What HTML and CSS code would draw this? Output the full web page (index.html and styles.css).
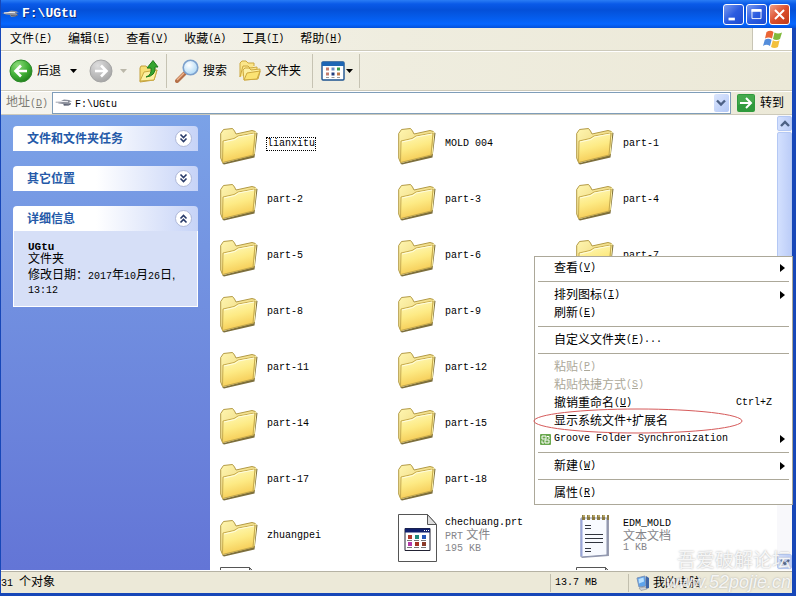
FILE: index.html
```html
<!DOCTYPE html>
<html lang="zh-CN">
<head>
<meta charset="utf-8">
<title>F:\UGtu</title>
<link rel="stylesheet" href="styles.css">
</head>
<body>
<svg class="defs" aria-hidden="true">
  <defs>
    <linearGradient id="gFolder" x1="0" y1="0" x2="0.3" y2="1"><stop offset="0" stop-color="#fffbc0"/><stop offset="0.55" stop-color="#fdea84"/><stop offset="1" stop-color="#f5cb55"/></linearGradient>
    <linearGradient id="gBack" x1="0" y1="0" x2="1" y2="1"><stop offset="0" stop-color="#fff6b0"/><stop offset="1" stop-color="#e5c765"/></linearGradient>
    <radialGradient id="gGreen" cx="0.35" cy="0.25" r="0.8"><stop offset="0" stop-color="#8fdc7c"/><stop offset="0.6" stop-color="#3fae35"/><stop offset="1" stop-color="#1f7d1c"/></radialGradient>
    <radialGradient id="gGrey" cx="0.35" cy="0.25" r="0.8"><stop offset="0" stop-color="#dedede"/><stop offset="1" stop-color="#a3a3a3"/></radialGradient>
    <radialGradient id="gLens" cx="0.4" cy="0.35" r="0.7"><stop offset="0" stop-color="#fff"/><stop offset="1" stop-color="#a9d6f5"/></radialGradient>
    <symbol id="folder" viewBox="0 0 38 38">
      <path d="M2 36.500L4 37.500 34.500 30.500 37.500 6 35 5 33 28z" fill="#7d6f3c"/>
      <path d="M.7 31V6.500L3.500 2.500 12.500 1.500 14.500 4 16 7 32 3.500 35.500 4.500 34 28 2.500 35.500z" fill="url(#gBack)" stroke="#b39a45"/>
      <path d="M33 6l3-1-2 22" fill="none" stroke="#fff4a8"/>
      <path d="M3 14L14 11.500 18 9 35 6 33 28 2.500 35.500z" fill="url(#gFolder)" stroke="#c6aa4d"/>
      <path d="M4 15L15 12.500 18.500 10 34 7" fill="none" stroke="#fffde0"/>
    </symbol>
    <symbol id="ship" viewBox="0 0 17 8">
      <path d="M0 3l6-1 3-1.500 5 .5 3 1.500-3 .5 2 2-3 1.500-4 .5L8 5 4 4.500z" fill="#8b8f9b"/>
      <path d="M2 3l6-.5 5 .2" stroke="#f4f4f8" fill="none"/><path d="M9 5.500l5 .5 2-1.500" stroke="#5a6072" fill="none"/>
    </symbol>
    <symbol id="caret" viewBox="0 0 7 4"><path d="M0 0h7L3.500 4z" fill="currentColor"/></symbol>
    <symbol id="dbl" viewBox="0 0 19 19">
      <circle cx="9.500" cy="9.500" r="8" fill="#fff" stroke="#aeb8d8"/>
      <path d="M6.500 5.500l3 3 3-3M6.500 9.500l3 3 3-3" fill="none" stroke="#283a68" stroke-width="1.600"/>
    </symbol>
    <symbol id="pc" viewBox="0 0 14 16">
      <path d="M1 3l8-2 1 10-7 1z" fill="#5da3ec" stroke="#7c93b8"/><path d="M2.500 4l5-1.500.5 4-5 2z" fill="#b9e0ff"/><path d="M10 1l3 2v10l-3 1z" fill="#3f66a8"/><path d="M3 13l6-1 2 2-6 1.500z" fill="#cfd3d8" stroke="#8b8f96" stroke-width="0.600"/>
    </symbol>
  </defs>
</svg>

<div class="window">
  <header class="titlebar">
    <svg class="ship"><use href="#ship"/></svg>
    <h1>F:\UGtu</h1>
    <div class="winbtns">
      <button class="wbtn" aria-label="最小化"><svg viewBox="0 0 21 21"><path d="M5 15.500h7" stroke="#fff" stroke-width="3"/></svg></button>
      <button class="wbtn" aria-label="最大化"><svg viewBox="0 0 21 21"><path d="M5.500 5h10v10h-10z" fill="none" stroke="#fff"/><path d="M5 6h11" stroke="#fff" stroke-width="3"/></svg></button>
      <button class="wbtn close" aria-label="关闭"><svg viewBox="0 0 21 21"><path d="M5.500 5.500l10 10M15.500 5.500l-10 10" stroke="#fff" stroke-width="2.200"/></svg></button>
    </div>
  </header>

  <nav class="menubar">
    <button>文件<span class="en">(<u>F</u>)</span></button>
    <button>编辑<span class="en">(<u>E</u>)</span></button>
    <button>查看<span class="en">(<u>V</u>)</span></button>
    <button>收藏<span class="en">(<u>A</u>)</span></button>
    <button>工具<span class="en">(<u>T</u>)</span></button>
    <button>帮助<span class="en">(<u>H</u>)</span></button>
    <div class="flag"><svg viewBox="0 0 20 19">
      <path d="M3.500 2q4-2.500 7 0L9 8.500q-3.500-2-7 0z" fill="#ea6535"/>
      <path d="M11.500 2.500q3.500 2 7.500 0l-2 6.500q-3.500 2-7 0z" fill="#80b93c"/>
      <path d="M1.800 9.700q3.500-2 6.800 0L7 16q-3.500-2.300-7 0z" fill="#548ddb"/>
      <path d="M9.800 10.300q3.500 2 6.800 0L15 17q-3.500 2-7 0z" fill="#f3c03d"/></svg></div>
  </nav>

  <div class="toolbar">
    <button class="tool"><svg class="i24" viewBox="0 0 24 24"><circle cx="12" cy="12" r="11" fill="url(#gGreen)" stroke="#2e8a2a"/><path d="M18 12H7M12 6.500L6.500 12l5.500 5.500" fill="none" stroke="#fff" stroke-width="2.600"/></svg>后退</button>
    <button class="drop" aria-label="后退列表"><svg class="caret"><use href="#caret"/></svg></button>
    <button class="tool" aria-label="前进"><svg class="i24" viewBox="0 0 24 24"><circle cx="12" cy="12" r="11" fill="url(#gGrey)" stroke="#a5a5a5"/><path d="M6 12h11M12 6.500l5.500 5.500-5.500 5.500" fill="none" stroke="#fff" stroke-width="2.600"/></svg></button>
    <button class="drop off" aria-label="前进列表"><svg class="caret"><use href="#caret"/></svg></button>
    <button class="tool up" aria-label="向上"><svg class="i24" viewBox="0 0 24 24"><path d="M2 9l1-2h5l2 2h7v3l2-1-3 10L2 23z" fill="#f8df74" stroke="#c3a03c"/><path d="M2 22l4-9 13-2-3 10z" fill="#fdf0a0" stroke="#c9a840"/><path d="M8 18q6-2 5-9H9l6-7.500L20 8h-3q1 9-9 10z" fill="#35a52f" stroke="#1e7a1c"/></svg></button>
    <span class="sep"></span>
    <button class="tool"><svg class="i24" viewBox="0 0 24 24"><path d="M2 22l8-8" stroke="#b5704a" stroke-width="4" stroke-linecap="round"/><path d="M2 21l7-7" stroke="#f0b48c" stroke-width="1.500"/><circle cx="15.500" cy="8.500" r="7.300" fill="url(#gLens)" stroke="#7ca0cc" stroke-width="1.600"/></svg>搜索</button>
    <button class="tool folders"><svg class="i24" viewBox="0 0 24 24"><path d="M2 18V4l2-2h4l2 2h6v3" fill="#fbe68a" stroke="#cda83e"/><path d="M2 18L5 7h5l2 2 7-1v3" fill="#fbe68a" stroke="#cda83e"/><path d="M6 21l-1-10 2-2h4l2 2 9-1v3l-2 7z" fill="#fdf0a2" stroke="#cda83e"/><path d="M6 21l3-7 13-2-3 8z" fill="#fbe373" stroke="#cda83e"/></svg>文件夹</button>
    <span class="sep"></span>
    <button class="tool views" aria-label="查看"><svg class="i24" viewBox="0 0 24 24"><rect x="1" y="3" width="22" height="18" rx="1" fill="#fff" stroke="#1c5390" stroke-width="1.400"/><path d="M1 5h22" stroke="#1e66b4" stroke-width="4"/><path d="M5 10h3M5 15h3" stroke="#c47c6c" stroke-width="3"/><path d="M10.500 10h3" stroke="#6b8dc4" stroke-width="3"/><path d="M10.500 15h3" stroke="#203c7c" stroke-width="3"/><path d="M16 10h3" stroke="#3a9a4a" stroke-width="3"/><path d="M16 15h3" stroke="#c07848" stroke-width="3"/><path d="M5 18.500h14" stroke="#999" stroke-dasharray="3 2.500"/></svg><svg class="caret"><use href="#caret"/></svg></button>
    <span class="sep"></span>
  </div>

  <div class="addressbar">
    <label for="addr">地址<span class="en">(<u>D</u>)</span></label>
    <div class="field">
      <svg class="ship"><use href="#ship"/></svg>
      <input id="addr" type="text" value="F:\UGtu">
      <button class="pick" aria-label="展开"><svg viewBox="0 0 10 8"><path d="M1 1.500l4 4 4-4" fill="none" stroke="#4d6185" stroke-width="2.400"/></svg></button>
    </div>
    <button class="go"><svg viewBox="0 0 18 18"><rect width="18" height="18" rx="2" fill="#2f9a3c"/><path d="M1 1h16v7q-8-2-16 3z" fill="#5cb85c" opacity="0.500"/><path d="M3 9h11M9 4l5 5-5 5" fill="none" stroke="#fff" stroke-width="2"/></svg>转到</button>
  </div>

  <div class="main">
    <aside class="side">
      <section class="panel"><h2>文件和文件夹任务<svg><use href="#dbl"/></svg></h2></section>
      <section class="panel"><h2>其它位置<svg><use href="#dbl"/></svg></h2></section>
      <section class="panel open"><h2>详细信息<svg class="flip"><use href="#dbl"/></svg></h2>
        <div class="details">
          <p class="name">UGtu</p>
          <p>文件夹</p>
          <p class="date">修改日期：<span class="en">2017</span>年<span class="en">10</span>月<span class="en">26</span>日, <span class="en">13:12</span></p>
        </div>
      </section>
    </aside>

    <main class="files">
      <div class="item"><svg class="fi"><use href="#folder"/></svg><span class="label focus">lianxitu</span></div>
      <div class="item"><svg class="fi"><use href="#folder"/></svg><span class="label">MOLD 004</span></div>
      <div class="item"><svg class="fi"><use href="#folder"/></svg><span class="label">part-1</span></div>
      <div class="item"><svg class="fi"><use href="#folder"/></svg><span class="label">part-2</span></div>
      <div class="item"><svg class="fi"><use href="#folder"/></svg><span class="label">part-3</span></div>
      <div class="item"><svg class="fi"><use href="#folder"/></svg><span class="label">part-4</span></div>
      <div class="item"><svg class="fi"><use href="#folder"/></svg><span class="label">part-5</span></div>
      <div class="item"><svg class="fi"><use href="#folder"/></svg><span class="label">part-6</span></div>
      <div class="item"><svg class="fi"><use href="#folder"/></svg><span class="label">part-7</span></div>
      <div class="item"><svg class="fi"><use href="#folder"/></svg><span class="label">part-8</span></div>
      <div class="item"><svg class="fi"><use href="#folder"/></svg><span class="label">part-9</span></div>
      <div class="item c1"><svg class="fi"><use href="#folder"/></svg><span class="label">part-11</span></div>
      <div class="item"><svg class="fi"><use href="#folder"/></svg><span class="label">part-12</span></div>
      <div class="item c1"><svg class="fi"><use href="#folder"/></svg><span class="label">part-14</span></div>
      <div class="item"><svg class="fi"><use href="#folder"/></svg><span class="label">part-15</span></div>
      <div class="item c1"><svg class="fi"><use href="#folder"/></svg><span class="label">part-17</span></div>
      <div class="item"><svg class="fi"><use href="#folder"/></svg><span class="label">part-18</span></div>
      <div class="item c1"><svg class="fi"><use href="#folder"/></svg><span class="label">zhuangpei</span></div>
      <div class="item"><svg class="doc" viewBox="0 0 40 48"><path d="M.5.500h29l9 10v37H.5z" fill="#fff" stroke="#555"/><path d="M29.500.500v10h9z" fill="#ddd" stroke="#555"/><path d="M7 14.500h25v22H7z" fill="#fff" stroke="#223"/><path d="M7 16.500h25" stroke="#10206e" stroke-width="4"/><path d="M26 16.500h5" stroke="#fff" stroke-dasharray="1 1"/><path d="M10 21h4v4h-4z" fill="#b03a2e"/><path d="M17 21h4v4h-4z" fill="#1e8a7a"/><path d="M24 21h4v4h-4z" fill="#2456b8"/><path d="M10 28h4v4h-4z" fill="#b53aa8"/><path d="M17 28h4v4h-4z" fill="#a43324"/><path d="M24 28h4v4h-4z" fill="#8a3a28"/><path d="M9 26.500h20M9 33.500h20" stroke="#777" stroke-dasharray="5 2"/></svg>
        <div class="meta"><span class="label">chechuang.prt</span><span><span class="en">PRT</span> 文件</span><span class="en">195 KB</span></div></div>
      <div class="item"><svg class="doc" viewBox="0 0 40 48"><path d="M6 43l26-2V5" fill="none" stroke="#9a9db0" stroke-width="2"/><path d="M5 4h26v37L5 43z" fill="#f8faff" stroke="#8a92ac"/><path d="M5.500 5v37" stroke="#99a5d8" stroke-width="2"/><path d="M6 3.500h27" stroke="#8a7a42" stroke-width="5" stroke-dasharray="3 2"/><path d="M7 2h25" stroke="#e4d68e" stroke-dasharray="2 3"/><path d="M9 11.500h6M9 14.500h6M9 20.500h18M9 24.500h18M9 28.500h18M9 34.500h6M9 37.500h6" stroke="#30343e"/></svg>
        <div class="meta"><span class="label">EDM_MOLD</span><span>文本文档</span><span class="en">1 KB</span></div></div>
      <div class="item next c1"><svg class="doc" viewBox="0 0 40 48"><path d="M.5.500h29l9 10v37H.5z" fill="#fff" stroke="#555"/><path d="M29.500.500v10h9z" fill="#ddd" stroke="#555"/></svg></div>
      <div class="item next c3"><svg class="doc" viewBox="0 0 40 48"><path d="M.5.500h29l9 10v37H.5z" fill="#fff" stroke="#555"/><path d="M29.500.500v10h9z" fill="#ddd" stroke="#555"/></svg></div>
    </main>

    <div class="scroll">
      <button aria-label="向上滚动"><svg viewBox="0 0 10 8"><path d="M1 6l4-4 4 4" fill="none" stroke="#4d6185" stroke-width="2.400"/></svg></button>
      <div class="thumb"></div><div class="track"></div>
      <button aria-label="向下滚动"><svg viewBox="0 0 10 8"><path d="M1 2l4 4 4-4" fill="none" stroke="#4d6185" stroke-width="2.400"/></svg></button>
    </div>
  </div>

  <footer class="status">
    <span class="count"><span class="en">31 </span>个对象</span>
    <span class="size en">13.7 MB</span>
    <span class="place"><svg><use href="#pc"/></svg>我的电脑</span>
  </footer>
</div>

<div class="context" role="menu">
  <button class="sub">查看<span class="en">(<u>V</u>)</span></button>
  <hr>
  <button class="sub">排列图标<span class="en">(<u>I</u>)</span></button>
  <button>刷新<span class="en">(<u>E</u>)</span></button>
  <hr>
  <button>自定义文件夹<span class="en">(<u>F</u>)...</span></button>
  <hr>
  <button disabled>粘贴<span class="en">(<u>P</u>)</span></button>
  <button disabled>粘贴快捷方式<span class="en">(<u>S</u>)</span></button>
  <button>撤销重命名<span class="en">(<u>U</u>)</span><kbd>Ctrl+Z</kbd></button>
  <button class="marked">显示系统文件<span class="en">+</span>扩展名<svg class="ring" viewBox="0 0 210 26"><ellipse cx="105" cy="13" rx="104" ry="12" fill="none" stroke="#d65a5a"/></svg></button>
  <button class="sub groove"><svg class="gi" viewBox="0 0 11 11"><rect width="11" height="11" rx="1" fill="#6aa84f"/><path d="M2 2h4v3H2zM5 6h4v3H5zM7 2.500h2V5M2 6.500V9h2" fill="none" stroke="#fff"/></svg><span class="en">Groove Folder Synchronization</span></button>
  <hr>
  <button class="sub">新建<span class="en">(<u>W</u>)</span></button>
  <hr>
  <button>属性<span class="en">(<u>R</u>)</span></button>
</div>

<div class="stamp"><span>吾爱破解论坛</span><i>www.52pojie.cn</i></div>
</body>
</html>
```
FILE: styles.css
```css
* { box-sizing: border-box; }
body {
  margin: 0;
  font: 12px/14px "Liberation Sans", "Noto Sans CJK SC", sans-serif;
  color: #000;
  overflow: hidden;
}
button {
  border: 0;
  padding: 0;
  margin: 0;
  background: none;
  font: inherit;
  color: inherit;
  display: flex;
  align-items: center;
}
h1, h2, p { margin: 0; font-size: 12px; }
svg { flex: none; display: block; }
.defs { position: absolute; width: 0; height: 0; }
.en, .label, kbd, input { font-family: "Liberation Mono", monospace; font-size: 10px; white-space: pre; }
.ship { width: 17px; height: 8px; }
.caret { width: 7px; height: 4px; }

.window {
  height: 100vh;
  display: flex;
  flex-direction: column;
  border: solid #1747b8;
  border-width: 0 4px 3px 1px;
  background: #ece9d8;
}

.titlebar {
  height: 28px;
  margin-right: -4px;
  padding: 0 6px 0 1px;
  display: flex;
  align-items: center;
  gap: 3px;
  background: linear-gradient(#2a7df5 0, #0a5ae8 4px, #0450d8 10px, #0560f2 20px, #0666ff 24px, #0350da 28px);
}
.titlebar h1 {
  flex: 1;
  font: bold 13px/16px "Liberation Mono", monospace;
  color: #fff;
  text-shadow: 1px 1px #0a2a80;
}
.winbtns { display: flex; gap: 2px; }
.wbtn {
  width: 21px;
  height: 21px;
  border: 1px solid #fff;
  border-radius: 3px;
  background: linear-gradient(135deg, #7d9cf0, #2c5ce0 50%, #1d4bd0);
}
.wbtn.close { background: linear-gradient(135deg, #f0a088, #dc4f2c 50%, #c03a18); }
.wbtn svg { width: 19px; height: 19px; }

.menubar, .toolbar, .addressbar {
  display: flex;
  background: linear-gradient(90deg, #f5f4ef, #efeddf 50%, #ece9d8);
  border-bottom: 1px solid #cdcabb;
}
.menubar { height: 23px; padding-left: 9px; gap: 16px; }
.flag {
  width: 40px;
  margin-left: auto;
  background: #fff;
  border-left: 1px solid #c8c5b5;
  display: grid;
  place-items: center;
}
.flag svg { width: 20px; height: 19px; }

.toolbar { height: 40px; padding: 2px 0 2px 8px; border-top: 1px solid #fff; align-items: center; }
.tool { gap: 4px; }
.i24 { width: 24px; height: 24px; }
.drop { width: 28px; padding-left: 9px; height: 24px; }
.drop.off { width: 25px; padding-left: 7px; color: #bbb8aa; }
.up { margin-right: 4px; }
.sep { width: 1px; height: 34px; margin-right: 8px; background: #c6c3b3; }
.folders { margin: 0 11px; gap: 3px; }
.views { gap: 1px; margin-right: 6px; }

.addressbar { height: 24px; border-top: 1px solid #fff; align-items: center; }
.addressbar label { width: 51px; padding-left: 5px; color: #7d7c74; white-space: nowrap; }
.field {
  flex: 1;
  height: 22px;
  display: flex;
  align-items: center;
  border: 1px solid #7f9db9;
  background: #fff;
  padding: 0 1px 0 2px;
}
.field input { flex: 1; min-width: 0; border: 0; padding: 2px 0 0 3px; outline: 0; background: none; }
.pick {
  width: 15px;
  height: 18px;
  justify-content: center;
  border-radius: 2px;
  background: linear-gradient(135deg, #dce6fd, #b3c8f6);
}
.pick svg, .scroll svg { width: 10px; height: 8px; }
.go { gap: 5px; padding: 0 8px 0 6px; }
.go svg { width: 18px; height: 18px; }

.main { flex: 1; min-height: 0; display: flex; background: #fff; border-bottom: 1px solid #fff; }
.side {
  width: 209px;
  padding: 11px 12px;
  display: flex;
  flex-direction: column;
  gap: 15px;
  background: linear-gradient(#7ba2e7, #6375d6);
}
.panel h2 {
  height: 25px;
  display: flex;
  align-items: center;
  justify-content: space-between;
  padding: 0 5px 0 14px;
  border-radius: 4px 4px 0 0;
  background: linear-gradient(90deg, #fff 45%, #c6d3f7);
  color: #2459a8;
}
.panel h2 svg { width: 19px; height: 19px; }
.flip { transform: rotate(180deg); }
.details {
  padding: 10px 12px 9px 14px;
  border: 1px solid #fff;
  border-top: 0;
  background: #d6dff7;
  line-height: 12px;
}
.details .name { font: bold 11px/12px "Liberation Mono", monospace; }
.details .date { margin-top: 4px; }

.files {
  flex: 1;
  min-width: 0;
  overflow: hidden;
  padding: 2px 0 0 10px;
  display: grid;
  grid-template-columns: repeat(3, 178px);
  grid-auto-rows: 56px;
  align-content: start;
}
.item { display: flex; align-items: center; gap: 9px; padding-bottom: 2px; }
.c1 { grid-column: 1; }
.c3 { grid-column: 3; }
.fi { width: 38px; height: 38px; margin-top: 3px; }
.doc { width: 40px; height: 48px; margin-top: 3px; margin-right: -2px; }
.next { align-items: flex-start; }
.next .doc { margin-top: 2px; }
.label { line-height: 12px; }
.focus { outline: 1px dotted #000; }
.meta { display: flex; flex-direction: column; line-height: 12px; color: #85858a; }
.meta .label { color: #000; }

.scroll { width: 15px; display: flex; flex-direction: column; gap: 1px; background: #f8f8fb; padding: 1px 0; }
.scroll button, .thumb {
  height: 15px;
  justify-content: center;
  border: 1px solid #b4c8f4;
  border-radius: 2px;
  background: linear-gradient(90deg, #d3e0fe, #bccdf8);
}
.thumb { flex: 7; }
.track { flex: 2; }

.status { height: 22px; display: flex; align-items: center; border-top: 1px solid #b5b2a4; }
.count { flex: 1; }
.size, .place { height: 18px; line-height: 18px; border-left: 1px solid #c2bfae; padding-left: 4px; }
.size { width: 78px; }
.place { width: 164px; display: flex; align-items: center; gap: 3px; padding-left: 7px; }
.place svg { width: 14px; height: 16px; }

.context {
  position: absolute;
  top: 256px;
  right: 3px;
  width: 259px;
  padding: 2px;
  border: 1px solid #aca899;
  background: #fff;
}
.context button { position: relative; width: 100%; height: 18px; padding-left: 17px; white-space: nowrap; }
.context button:disabled { color: #aca899; }
.context hr { height: 1px; border: 0; margin: 4px 1px; background: #aca899; }
.context kbd { margin: 0 18px 0 auto; }
.sub::after {
  content: "";
  margin: 0 5px 0 auto;
  border: solid transparent;
  border-width: 4px 0 4px 5px;
  border-left-color: #000;
}
.gi { position: absolute; left: 3px; width: 11px; height: 11px; }
.ring { position: absolute; left: -4px; top: -4px; width: 210px; height: 26px; z-index: 1; }

.stamp {
  position: absolute;
  right: 5px;
  bottom: 4px;
  display: flex;
  flex-direction: column;
  align-items: flex-end;
  color: rgba(255, 255, 255, 0.85);
  text-shadow: 0 0 2px #a8a8a8;
  pointer-events: none;
  font-size: 19px;
  line-height: 22px;
}
.stamp i { font: italic 18px/20px "Liberation Sans", sans-serif; }
```
